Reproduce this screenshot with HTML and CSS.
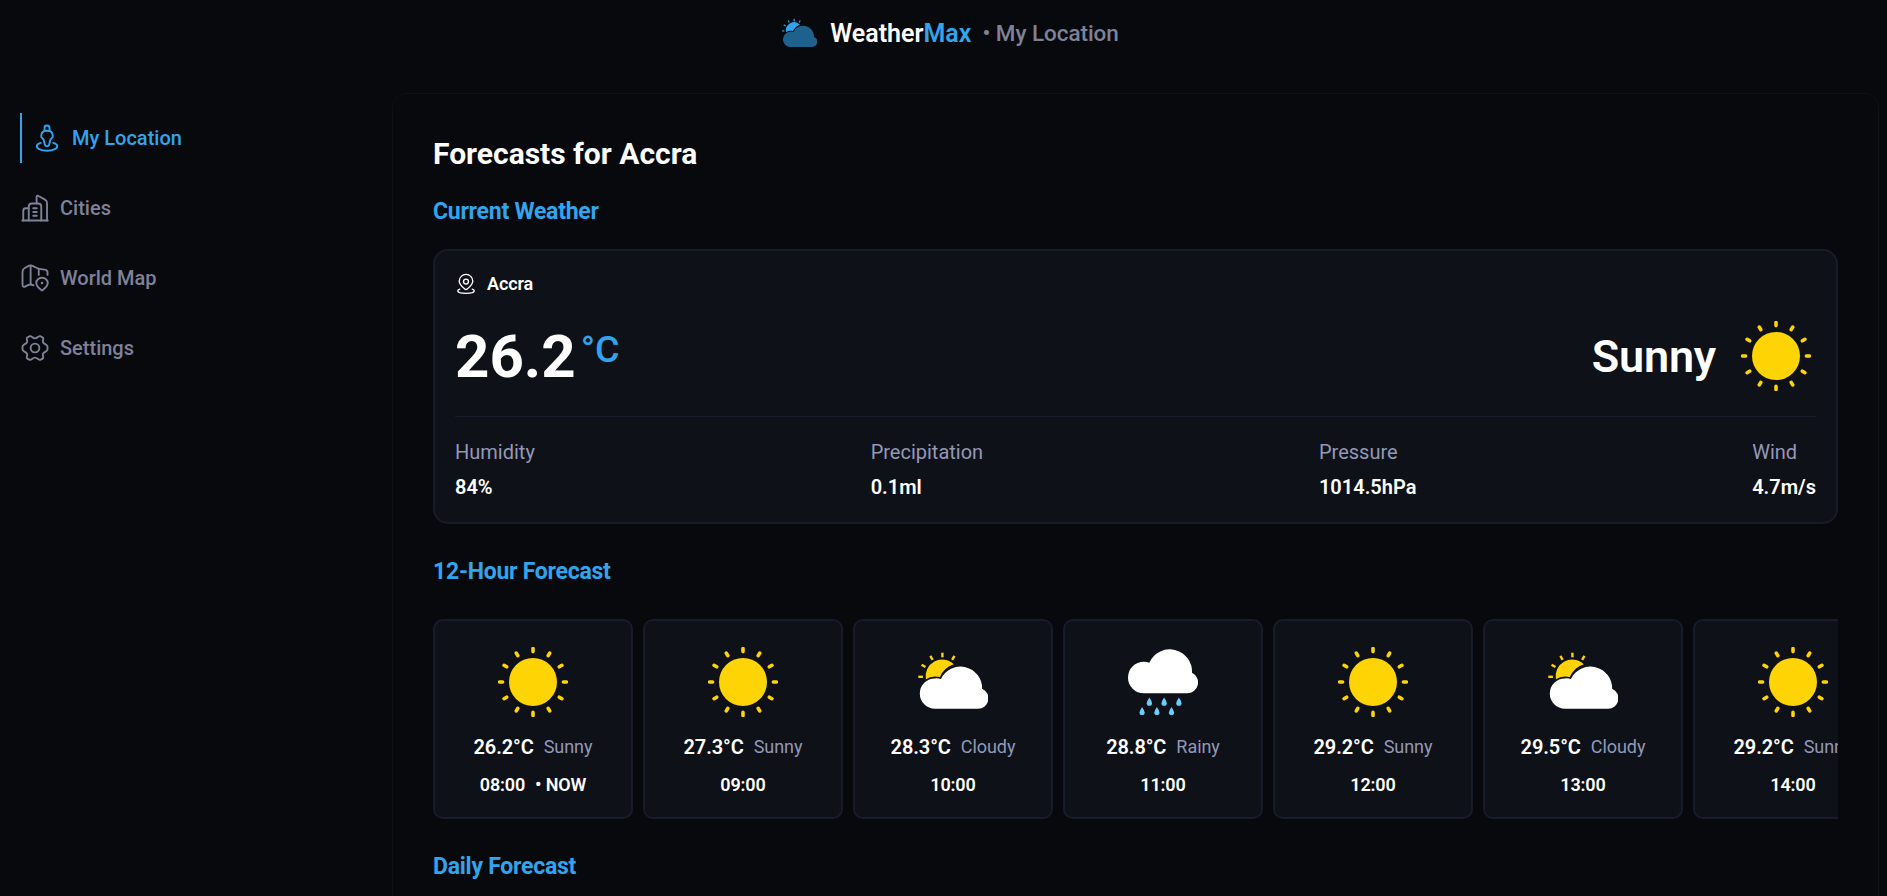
FILE: index.html
```
<!DOCTYPE html>
<html lang="en">
<head>
<meta charset="utf-8">
<title>WeatherMax</title>
<link rel="stylesheet" href="styles.css">
</head>
<body>
<svg class="sprite" aria-hidden="true">
  <defs>
    <symbol id="sun" viewBox="0 0 70 70">
      <circle cx="35" cy="35" r="24" fill="currentColor"/>
      <g stroke="currentColor" stroke-width="3.6" stroke-linecap="round">
        <path d="M35 1.6v3M35 65.4v3M1.6 35h3M65.4 35h3"/>
        <path d="M35 1.6v3M35 65.4v3M1.6 35h3M65.4 35h3" transform="rotate(30 35 35)"/>
        <path d="M35 1.6v3M35 65.4v3M1.6 35h3M65.4 35h3" transform="rotate(60 35 35)"/>
      </g>
    </symbol>
    <symbol id="cloudy" viewBox="0 0 70 70">
      <path class="sun-part" d="M7.9 32.3A16.6 16.6 0 0 1 35.8 17.3Q26 20.5 21.9 30Q13.5 28.2 7.9 32.3Z"/>
      <g class="sun-rays" stroke-width="2.4">
        <path d="M24.4 5.7v4.6"/>
        <path d="M24.4 5.7v4.6" transform="rotate(30 24.4 29.8)"/>
        <path d="M24.4 5.7v4.6" transform="rotate(-30 24.4 29.8)"/>
        <path d="M24.4 5.7v4.6" transform="rotate(-60 24.4 29.8)"/>
        <path d="M24.4 5.7v4.6" transform="rotate(-90 24.4 29.8)"/>
      </g>
      <path class="cloud-part" d="M17 61.8A15.2 15.2 0 0 1 17 31.4Q20.5 31.2 22.9 32.1A21.6 21.6 0 0 1 64.1 41.8A10.4 10.4 0 0 1 60 61.8Z"/>
    </symbol>
    <symbol id="rainy" viewBox="0 0 70 70">
      <path fill="#fff" d="M15.8 46.3A15.8 15.8 0 0 1 15.8 14.7Q19 14.6 21.3 15.7A22.3 22.3 0 0 1 64 25.8A10.8 10.8 0 0 1 59.3 46.3Z"/>
      <g fill="#66d0fb">
        <path id="drop" d="M21.4 50.6Q24 54.4 24 56.2A2.6 2.6 0 0 1 18.8 56.2Q18.8 54.4 21.4 50.6Z"/>
        <use href="#drop" x="14.7"/>
        <use href="#drop" x="29.5"/>
        <use href="#drop" x="-7.3" y="9.3"/>
        <use href="#drop" x="7.5" y="9.3"/>
        <use href="#drop" x="22.1" y="9.3"/>
      </g>
    </symbol>
  </defs>
</svg>

<header class="header">
  <svg class="logo"><use href="#cloudy"/></svg>
  <span class="brand">Weather<span class="accent">Max</span></span>
  <span class="crumb">• My Location</span>
</header>

<div class="layout">
  <nav class="sidebar">
    <a class="nav-item active">
      <svg class="nav-icon" viewBox="0 0 24 24">
        <path d="M10 6.4V4A2 2 0 0 1 14 4V6.4"/>
        <path d="M9.6 6.5C8.2 7.1 7.3 9 7.4 10.9C7.6 12.3 9.1 12.3 9.4 13.6L10.2 17.2C10.6 19 13.4 19 13.8 17.2L14.6 13.6C14.9 12.3 16.4 12.3 16.6 10.9C16.7 9 15.8 7.1 14.4 6.5C13 6.1 11 6.1 9.6 6.5Z"/>
        <path d="M7 15.9C5 16.5 3.8 17.4 3.8 18.5C3.8 20.7 7.4 22.2 12 22.2S20.2 20.7 20.2 18.5C20.2 17.4 19 16.5 17 15.9"/>
      </svg>
      <span>My Location</span>
    </a>
    <a class="nav-item">
      <svg class="nav-icon" viewBox="0 0 24 24">
        <path d="M7 22V11C7 9 7.6 8.4 9.6 8.4H14.4C16.4 8.4 17 9 17 11V22"/>
        <path d="M2.6 22V14.2C2.6 12.6 3 12.2 4.6 12.2H7"/>
        <path d="M13.3 8.4V3C13.3 2 14 1.9 14.8 2.4L20 5.3C21.4 6.1 21.6 6.5 21.6 8V22"/>
        <path d="M1.8 22H22.2M10.6 12.2H13.4M10.6 15.2H13.4M10.6 18.2H13.4"/>
      </svg>
      <span>Cities</span>
    </a>
    <a class="nav-item">
      <svg class="nav-icon" viewBox="0 0 24 24">
        <path d="M22 9.5V7.6C22 5.9 21.6 5.5 20 5.3C16.4 4.9 15.4 5 13.5 4L10 2.3C8.8 1.7 8 1.7 6.9 2.3L3.8 4C2.2 4.9 2 5.2 2 7V16.8C2 19 2.6 19.6 4.4 18.7L6.8 17.5C8 16.9 9 16.9 10.8 17.9"/>
        <path d="M8.5 2V17M15 4.8V9.5"/>
        <path d="M17.6 22C15.8 20.6 13 18.8 13 16A4.6 4.2 0 0 1 22.2 16C22.2 18.8 19.4 20.6 17.6 22Z"/>
        <path d="M17.6 16h.01" stroke-width="2"/>
      </svg>
      <span>World Map</span>
    </a>
    <a class="nav-item">
      <svg class="nav-icon" viewBox="0 0 24 24">
        <circle cx="12" cy="12" r="3.5"/>
        <path d="M12 4.3C10 4.3 9.2 2.1 7.9 2.5C6.9 2.9 6.2 3.2 5.6 3.8C4.8 4.6 6.3 6 5.6 7.4C4.8 9 2.8 8.8 2.1 10.5C1.9 11.4 1.9 12.6 2.1 13.5C2.8 15.2 4.8 15 5.6 16.6C6.3 18 4.8 19.4 5.6 20.2C6.2 20.8 6.9 21.1 7.9 21.5C9.2 21.9 10 19.7 12 19.7C14 19.7 14.8 21.9 16.1 21.5C17.1 21.1 17.8 20.8 18.4 20.2C19.2 19.4 17.7 18 18.4 16.6C19.2 15 21.2 15.2 21.9 13.5C22.1 12.6 22.1 11.4 21.9 10.5C21.2 8.8 19.2 9 18.4 7.4C17.7 6 19.2 4.6 18.4 3.8C17.8 3.2 17.1 2.9 16.1 2.5C14.8 2.1 14 4.3 12 4.3Z"/>
      </svg>
      <span>Settings</span>
    </a>
  </nav>

  <main class="panel">
    <h1 class="title">Forecasts for Accra</h1>

    <h2 class="section-title">Current Weather</h2>
    <section class="current">
      <div class="place">
        <svg class="place-icon" viewBox="0 0 24 24">
          <circle cx="12" cy="9.4" r="2.7"/>
          <path d="M13.3 17.5A1.9 1.9 0 0 1 10.7 17.5C7.4 14.6 4.6 12 4.6 8.9A7.4 7.4 0 0 1 19.4 8.9C19.4 12 16.6 14.6 13.3 17.5Z"/>
          <path d="M5.2 17.6C3.7 18 3 18.7 3 19.4C3 21 7 22.2 12 22.2S21 21 21 19.4C21 18.7 20.3 18 18.8 17.6"/>
        </svg>
        <span>Accra</span>
      </div>
      <div class="reading">
        <div class="degrees">26.2<span class="unit">°C</span></div>
        <div class="condition">Sunny<svg class="weather-icon"><use href="#sun"/></svg></div>
      </div>
      <div class="stats">
        <div><div class="label">Humidity</div><div class="value">84%</div></div>
        <div><div class="label">Precipitation</div><div class="value">0.1ml</div></div>
        <div><div class="label">Pressure</div><div class="value">1014.5hPa</div></div>
        <div><div class="label">Wind</div><div class="value">4.7m/s</div></div>
      </div>
    </section>

    <h2 class="section-title later">12-Hour Forecast</h2>
    <section class="hours">
      <article class="hour"><svg class="weather-icon"><use href="#sun"/></svg><div class="summary"><b>26.2°C</b><span>Sunny</span></div><div class="time">08:00<span class="now">• NOW</span></div></article>
      <article class="hour"><svg class="weather-icon"><use href="#sun"/></svg><div class="summary"><b>27.3°C</b><span>Sunny</span></div><div class="time">09:00</div></article>
      <article class="hour"><svg class="weather-icon"><use href="#cloudy"/></svg><div class="summary"><b>28.3°C</b><span>Cloudy</span></div><div class="time">10:00</div></article>
      <article class="hour"><svg class="weather-icon"><use href="#rainy"/></svg><div class="summary"><b>28.8°C</b><span>Rainy</span></div><div class="time">11:00</div></article>
      <article class="hour"><svg class="weather-icon"><use href="#sun"/></svg><div class="summary"><b>29.2°C</b><span>Sunny</span></div><div class="time">12:00</div></article>
      <article class="hour"><svg class="weather-icon"><use href="#cloudy"/></svg><div class="summary"><b>29.5°C</b><span>Cloudy</span></div><div class="time">13:00</div></article>
      <article class="hour"><svg class="weather-icon"><use href="#sun"/></svg><div class="summary"><b>29.2°C</b><span>Sunny</span></div><div class="time">14:00</div></article>
    </section>

    <h2 class="section-title later">Daily Forecast</h2>
  </main>
</div>
</body>
</html>
```

FILE: styles.css
```
* { box-sizing: border-box; }

body {
  margin: 0;
  height: 896px;
  overflow: hidden;
  display: flex;
  flex-direction: column;
  background: #08090d;
  color: #fff;
  font-family: Roboto, "Liberation Sans", sans-serif;
}

h1, h2 { margin: 0; }

.sprite { display: none; }

.header {
  flex: none;
  height: 66px;
  display: flex;
  align-items: center;
  justify-content: center;
  padding-left: 14px;
}

.logo {
  width: 35px;
  height: 35px;
  margin-right: 13px;
  --sun: #30a5ee;
  --cloud: #1f618d;
}

.brand { padding-top: 2px; font-size: 25px; font-weight: 600; line-height: 30px; }
.accent { color: #30a5ee; }
.crumb { margin-left: 11px; font-size: 22.5px; font-weight: 500; line-height: 30px; letter-spacing: -0.05px; color: #7e8299; }

.sun-part { fill: var(--sun); }
.sun-rays { stroke: var(--sun); }
.cloud-part { fill: var(--cloud); }

.layout {
  flex: 1;
  min-height: 0;
  display: flex;
  padding: 27px 8px 0 20px;
}

.sidebar {
  flex: none;
  width: 372px;
  padding-top: 20px;
  display: flex;
  flex-direction: column;
  gap: 20px;
}

.nav-item {
  height: 50px;
  display: flex;
  align-items: center;
  gap: 10px;
  font-size: 20px;
  font-weight: 500;
  color: #7e8299;
}

.nav-item.active {
  border-left: 2px solid #30a5ee;
  padding-left: 10px;
  color: #30a5ee;
}

.nav-icon,
.place-icon {
  flex: none;
  fill: none;
  stroke: currentColor;
  stroke-width: 1.5;
  stroke-linecap: round;
  stroke-linejoin: round;
}

.nav-icon { width: 30px; height: 30px; }
.place-icon { width: 22px; height: 22px; }

.panel {
  flex: 1;
  min-width: 0;
  padding: 40px 40px 0;
  border: 1px solid #0f1118;
  border-bottom: 0;
  border-radius: 15px 15px 0 0;
}

.title { font-size: 30px; font-weight: 700; line-height: 40px; }

.section-title {
  margin: 23px 0 22px;
  font-size: 23px;
  font-weight: 700;
  line-height: 30px;
  letter-spacing: -0.25px;
  color: #30a5ee;
}

.section-title.later { margin: 33px 0 32px; }

.section-title:last-child { margin-bottom: 0; }

.current {
  padding: 20px;
  border: 2px solid #181b2a;
  border-radius: 15px;
  background: #0e1118;
}

.place {
  display: flex;
  align-items: center;
  gap: 10px;
  font-size: 18px;
  font-weight: 600;
  line-height: 26px;
  letter-spacing: -0.1px;
}

.reading {
  height: 70px;
  margin: 24px 0 25px;
  display: flex;
  align-items: center;
  justify-content: space-between;
}

.degrees { display: flex; align-items: center; font-size: 60px; font-weight: 700; }
.unit { margin-left: 5px; padding-bottom: 15px; font-size: 37.5px; font-weight: 500; color: #30a5ee; }

.condition {
  display: flex;
  align-items: center;
  gap: 25px;
  padding-right: 5px;
  font-size: 45px;
  font-weight: 600;
  letter-spacing: -0.2px;
}

.weather-icon {
  flex: none;
  width: 70px;
  height: 70px;
  color: #ffd405;
  --sun: #ffd405;
  --cloud: #fff;
}

.stats {
  display: flex;
  justify-content: space-between;
  padding-top: 20px;
  border-top: 1px solid #181b2a;
  font-size: 20px;
  line-height: 30px;
}

.label { color: #9498b8; }
.value { margin-top: 5px; font-weight: 600; }

.hours { display: flex; gap: 10px; overflow: hidden; }

.hour {
  flex: none;
  width: 200px;
  height: 200px;
  padding-top: 26px;
  display: flex;
  flex-direction: column;
  align-items: center;
  border: 2px solid #181b2a;
  border-radius: 10px;
  background: #0e1118;
}

.summary {
  display: flex;
  gap: 10px;
  margin: 18px 0 14px;
  font-size: 18px;
  line-height: 24px;
  letter-spacing: -0.05px;
  color: #9498b8;
}

.summary b { font-size: 20px; font-weight: 600; letter-spacing: -0.1px; color: #fff; }

.time { display: flex; gap: 10px; font-size: 18px; font-weight: 600; line-height: 24px; letter-spacing: -0.15px; }
```
